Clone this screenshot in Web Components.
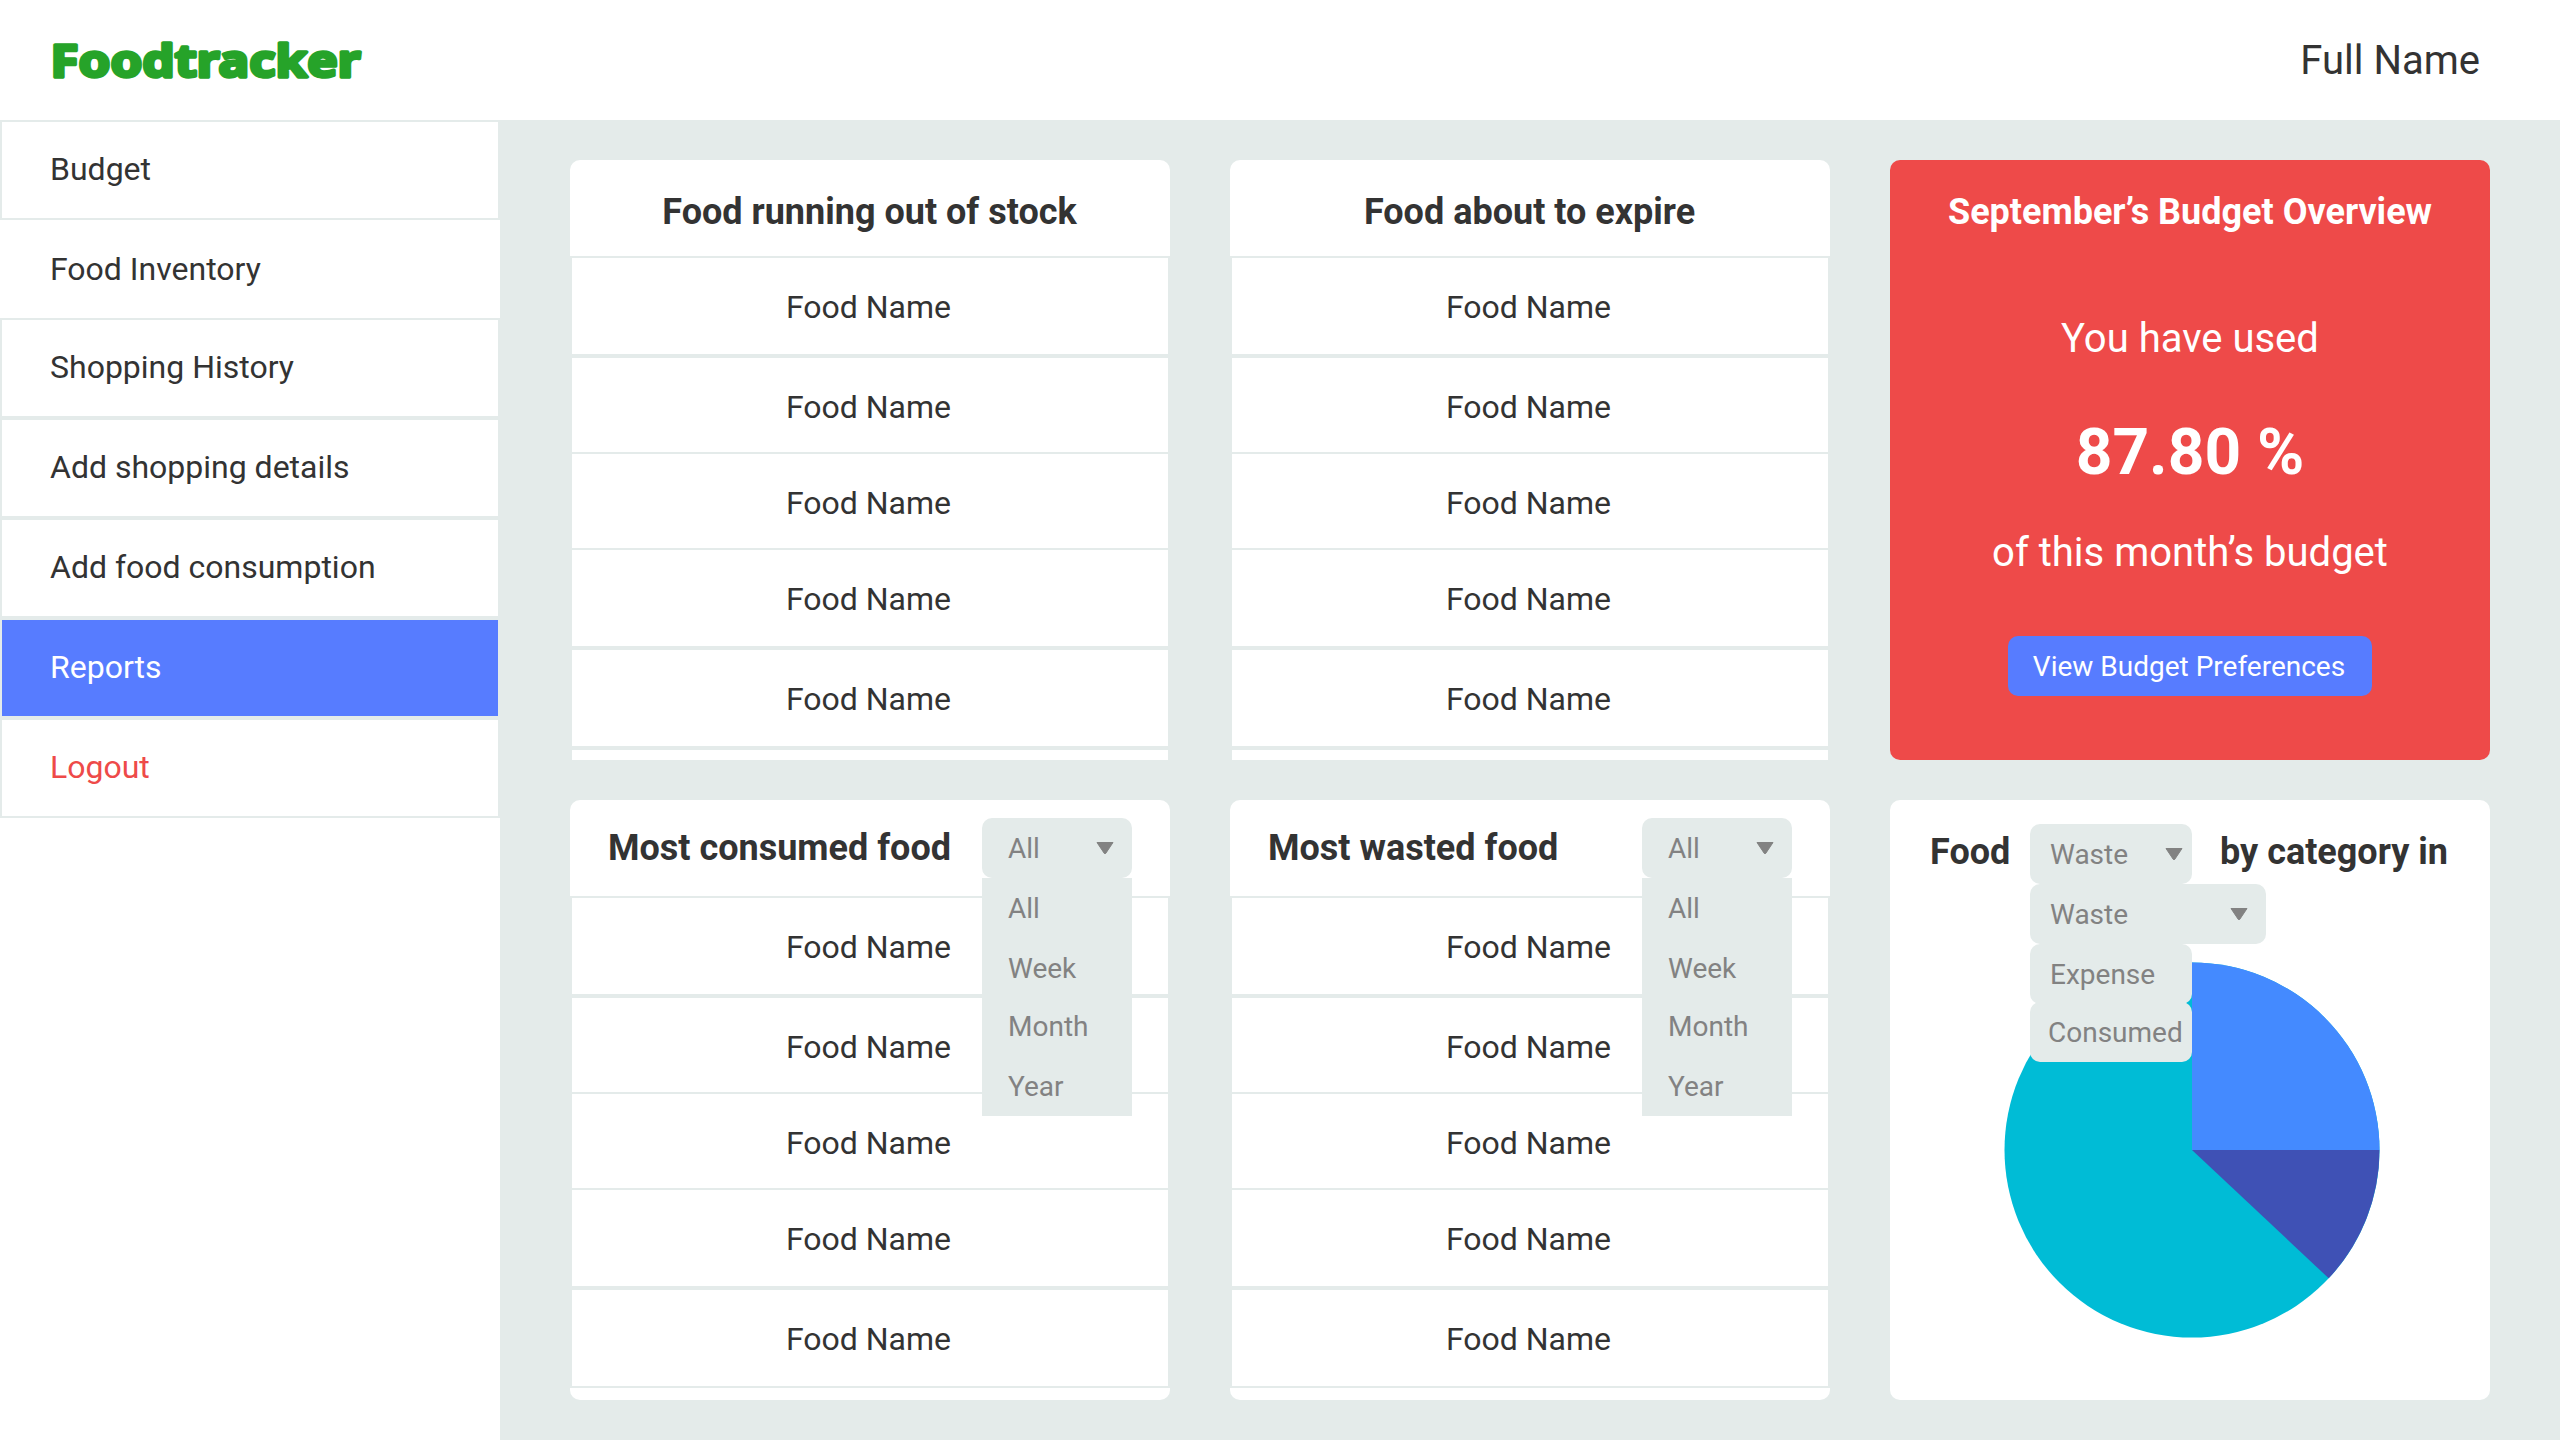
<!DOCTYPE html>
<html lang="en">
<head>
<meta charset="utf-8">
<title>Foodtracker</title>
<style>
  html, body { margin: 0; height: 100%; }
  body {
    --line: #e4ebea;
    --ink: #333333;
    --muted: #828282;
    --blue: #577cff;
    --red: #ee4a49;
    background: var(--line);
    color: var(--ink);
    font-family: Roboto, "Liberation Sans", sans-serif;
    overflow: hidden;
  }
</style>
</head>
<body>
<ft-app>
  <ft-header slot="header" user="Full Name"></ft-header>
  <ft-nav slot="nav">
    <ft-nav-item>Budget</ft-nav-item>
    <ft-nav-item plain>Food Inventory</ft-nav-item>
    <ft-nav-item>Shopping History</ft-nav-item>
    <ft-nav-item>Add shopping details</ft-nav-item>
    <ft-nav-item>Add food consumption</ft-nav-item>
    <ft-nav-item active>Reports</ft-nav-item>
    <ft-nav-item danger>Logout</ft-nav-item>
  </ft-nav>

  <ft-food-card stub>
    <span slot="title">Food running out of stock</span>
    <ft-food-row>Food Name</ft-food-row>
    <ft-food-row>Food Name</ft-food-row>
    <ft-food-row tuck>Food Name</ft-food-row>
    <ft-food-row tuck>Food Name</ft-food-row>
    <ft-food-row>Food Name</ft-food-row>
  </ft-food-card>

  <ft-food-card stub>
    <span slot="title">Food about to expire</span>
    <ft-food-row>Food Name</ft-food-row>
    <ft-food-row>Food Name</ft-food-row>
    <ft-food-row tuck>Food Name</ft-food-row>
    <ft-food-row tuck>Food Name</ft-food-row>
    <ft-food-row>Food Name</ft-food-row>
  </ft-food-card>

  <ft-budget-card>
    <span slot="title">September’s Budget Overview</span>
    <span slot="lead">You have used</span>
    <span slot="value">87.80 %</span>
    <span slot="tail">of this month’s budget</span>
    <span slot="action">View Budget Preferences</span>
  </ft-budget-card>

  <ft-food-card filter>
    <span slot="title">Most consumed food</span>
    <ft-select slot="filter" value="All">
      <ft-option>All</ft-option>
      <ft-option>Week</ft-option>
      <ft-option tuck>Month</ft-option>
      <ft-option>Year</ft-option>
    </ft-select>
    <ft-food-row>Food Name</ft-food-row>
    <ft-food-row>Food Name</ft-food-row>
    <ft-food-row tuck>Food Name</ft-food-row>
    <ft-food-row tuck>Food Name</ft-food-row>
    <ft-food-row>Food Name</ft-food-row>
  </ft-food-card>

  <ft-food-card filter>
    <span slot="title">Most wasted food</span>
    <ft-select slot="filter" value="All">
      <ft-option>All</ft-option>
      <ft-option>Week</ft-option>
      <ft-option tuck>Month</ft-option>
      <ft-option>Year</ft-option>
    </ft-select>
    <ft-food-row>Food Name</ft-food-row>
    <ft-food-row>Food Name</ft-food-row>
    <ft-food-row tuck>Food Name</ft-food-row>
    <ft-food-row tuck>Food Name</ft-food-row>
    <ft-food-row>Food Name</ft-food-row>
  </ft-food-card>

  <ft-chart-card>
    <span slot="before">Food</span>
    <ft-select slot="filter" value="Waste" compact>
      <ft-option round arrow>Waste</ft-option>
      <ft-option round>Expense</ft-option>
      <ft-option round tuck inset>Consumed</ft-option>
    </ft-select>
    <span slot="after">by category in</span>
    <ft-pie slot="chart"></ft-pie>
  </ft-chart-card>
</ft-app>

<script>
const define = (name, html, setup) => {
  const template = document.createElement('template');
  template.innerHTML = html;
  customElements.define(name, class extends HTMLElement {
    constructor() {
      super();
      this.attachShadow({ mode: 'open' }).append(template.content.cloneNode(true));
    }
    connectedCallback() {
      if (setup) setup(this, this.shadowRoot);
    }
  });
};

const ARROW = '<svg class="arrow" width="18" height="12" viewBox="0 0 18 12"><path d="M1 .5H17L9.7 11.4Q9 12.2 8.3 11.4Z" fill="#828282" stroke="#828282" stroke-width="1" stroke-linejoin="round"/></svg>';

define('ft-app', `
  <style>
    :host { display: flex; flex-direction: column; height: 1440px; }
    .body { flex: 1; display: flex; }
    main {
      flex: 1; display: grid; box-sizing: border-box;
      grid-template-columns: repeat(3, 600px); grid-template-rows: repeat(2, 600px);
      column-gap: 60px; row-gap: 40px; padding: 40px 70px;
    }
  </style>
  <slot name="header"></slot>
  <div class="body"><slot name="nav"></slot><main><slot></slot></main></div>`);

define('ft-header', `
  <style>
    :host {
      display: flex; justify-content: space-between; align-items: center; box-sizing: border-box;
      height: 120px; padding: 0 80px 0 40px; background: #fff; font-size: 40px; line-height: 47px;
    }
    svg { display: block; overflow: visible; }
    text {
      font: 700 45px "Noto Sans", "Open Sans", sans-serif; fill: #26a329;
      stroke: #26a329; stroke-width: 3.4px; stroke-linejoin: round;
    }
    #user { padding-top: 1px; }
  </style>
  <svg width="350" height="120"><text x="10.5" y="76.5" textLength="310" lengthAdjust="spacingAndGlyphs">Foodtracker</text></svg>
  <span id="user"></span>`,
  (host, root) => { root.getElementById('user').textContent = host.getAttribute('user'); });

define('ft-nav', `
  <style>:host { display: flex; flex-direction: column; width: 500px; background: #fff; }</style>
  <slot></slot>`);

define('ft-nav-item', `
  <style>
    :host {
      display: block; box-sizing: border-box; height: 100px; padding: 28px 0 0 48px;
      border: 2px solid var(--line); font-size: 32px; line-height: 38px;
    }
    :host([plain]) { border: 0; height: 98px; padding: 30px 0 0 50px; }
    :host([active]) { background: var(--blue); color: #fff; }
    :host([danger]) { color: var(--red); }
  </style>
  <slot></slot>`);

define('ft-food-card', `
  <style>
    :host { display: flex; flex-direction: column; background: #fff; border-radius: 10px; }
    header {
      display: flex; justify-content: center; box-sizing: border-box; height: 96px;
      padding: 31px 1px 0 0; font-weight: 700; font-size: 36px; line-height: 42px;
    }
    :host([filter]) header { justify-content: space-between; padding: 18px 38px 0 38px; }
    :host([filter]) .title { padding-top: 9px; }
    .stub { display: none; box-sizing: border-box; height: 12px; background: #fff; border: 2px solid var(--line); border-bottom: 0; }
    :host([stub]) .stub { display: block; }
  </style>
  <header><div class="title"><slot name="title"></slot></div><slot name="filter"></slot></header>
  <slot></slot>
  <div class="stub"></div>`);

define('ft-food-row', `
  <style>
    :host {
      display: block; box-sizing: border-box; height: 100px; padding: 30px 3px 0 0; text-align: center;
      border: 2px solid var(--line); background: #fff; font-size: 32px; line-height: 38px;
    }
    :host([tuck]) { margin-top: -4px; }
  </style>
  <slot></slot>`);

define('ft-select', `
  <style>
    :host { display: block; position: relative; width: 150px; height: 60px; font-weight: 400; font-size: 28px; line-height: 33px; color: var(--muted); }
    .field {
      display: flex; justify-content: space-between; align-items: flex-start; box-sizing: border-box;
      height: 60px; padding: 14px 18px 0 26px; border-radius: 10px; background: var(--line);
    }
    .arrow { margin-top: 10px; }
    .menu { position: absolute; z-index: 2; top: 60px; left: 0; min-width: 100%; --indent: 26px; }
    :host([compact]) { width: 162px; }
    :host([compact]) .field { padding: 14px 9px 0 20px; }
    :host([compact]) .menu { --indent: 20px; }
  </style>
  <div class="field"><span id="value"></span>${ARROW}</div>
  <div class="menu"><slot></slot></div>`,
  (host, root) => { root.getElementById('value').textContent = host.getAttribute('value'); });

define('ft-option', `
  <style>
    :host {
      display: flex; justify-content: space-between; box-sizing: border-box; height: 60px;
      padding: 14px 18px 0 var(--indent); background: var(--line);
    }
    :host([tuck]) { margin-top: -2px; }
    :host([round]) { width: 162px; border-radius: 10px; padding-right: 0; }
    :host([inset]) { padding-left: 18px; }
    :host([arrow]) { width: 236px; padding-right: 18px; }
    .arrow { display: none; margin-top: 10px; }
    :host([arrow]) .arrow { display: block; }
  </style>
  <slot></slot>${ARROW}`);

define('ft-budget-card', `
  <style>
    :host { display: flex; flex-direction: column; align-items: center; background: var(--red); color: #fff; border-radius: 10px; font-size: 40px; line-height: 47px; }
    .title { margin-top: 31px; font-weight: 700; font-size: 36px; line-height: 42px; }
    .lead { margin-top: 82px; }
    .value { margin-top: 53px; font-weight: 700; font-size: 64px; line-height: 75px; }
    .tail { margin-top: 39px; }
    button {
      display: block; margin: 60px 0 0; width: 364px; height: 60px; padding: 14px 2px 13px 0; border: 0; border-radius: 10px;
      background: var(--blue); color: #fff; font: 28px/33px Roboto, "Liberation Sans", sans-serif;
    }
  </style>
  <div class="title"><slot name="title"></slot></div>
  <div class="lead"><slot name="lead"></slot></div>
  <div class="value"><slot name="value"></slot></div>
  <div class="tail"><slot name="tail"></slot></div>
  <button type="button"><slot name="action"></slot></button>`);

define('ft-chart-card', `
  <style>
    :host { display: flex; flex-direction: column; background: #fff; border-radius: 10px; }
    header {
      display: flex; box-sizing: border-box; height: 96px; padding: 24px 0 0 40px;
      font-weight: 700; font-size: 36px; line-height: 42px; white-space: nowrap;
    }
    .before { width: 100px; padding-top: 7px; }
    .after { padding: 7px 0 0 28px; }
    .chart { padding: 66px 0 0 114px; }
  </style>
  <header>
    <div class="before"><slot name="before"></slot></div>
    <slot name="filter"></slot>
    <div class="after"><slot name="after"></slot></div>
  </header>
  <div class="chart"><slot name="chart"></slot></div>`);

define('ft-pie', `
  <style>:host, svg { display: block; }</style>
  <svg width="376" height="376" viewBox="-188 -188 376 376">
    <circle r="187.5" fill="#00bcd6"/>
    <path d="M0 0V-187.5A187.5 187.5 0 0 1 187.5 0Z" fill="#448aff"/>
    <path d="M0 0H187.5A187.5 187.5 0 0 1 136.7 128.3Z" fill="#3f51b5"/>
  </svg>`);
</script>
</body>
</html>
